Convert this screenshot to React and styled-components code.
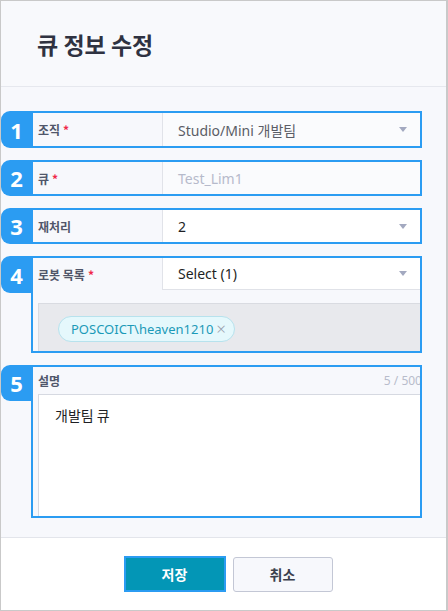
import styled, { createGlobalStyle } from "styled-components";

const GlobalStyle = createGlobalStyle`
  body {
    margin: 0;
    font-family: "Noto Sans", "Noto Sans CJK KR", sans-serif;
  }
`;

const BLUE = "#2b9cf2";

function Caret() {
  return (
    <svg width="8" height="5" viewBox="0 0 8 5">
      <polygon points="0,0 8,0 4,5" fill="#a3a9c0" />
    </svg>
  );
}

function Annotated({ num, badgeHeight = 36, height, children }) {
  return (
    <Row>
      <Badge h={badgeHeight}>{num}</Badge>
      <Box h={height}>{children}</Box>
    </Row>
  );
}

export default function App() {
  return (
    <>
      <GlobalStyle />
      <Frame>
        <Header>
          <h2>큐 정보 수정</h2>
        </Header>
        <Body>
          <Annotated num="1" badgeHeight={37} height={37}>
            <Field>
              <Label>
                조직<Star>*</Star>
              </Label>
              <Value tone="muted">
                <span>Studio/Mini 개발팀</span>
                <Caret />
              </Value>
            </Field>
          </Annotated>

          <Annotated num="2" height={36}>
            <Field>
              <Label>
                큐<Star>*</Star>
              </Label>
              <Value tone="placeholder">
                <span>Test_Lim1</span>
              </Value>
            </Field>
          </Annotated>

          <Annotated num="3" height={36}>
            <Field>
              <Label>재처리</Label>
              <Value tone="white">
                <span>2</span>
                <Caret />
              </Value>
            </Field>
          </Annotated>

          <Annotated num="4" badgeHeight={37} height={97}>
            <Stack>
              <Field fixed={32}>
                <Label>
                  로봇 목록<Star>*</Star>
                </Label>
                <Value tone="white" bordered>
                  <span>Select (1)</span>
                  <Caret />
                </Value>
              </Field>
              <TagArea>
                <Chip>
                  POSCOICT\heaven1210<ChipX>×</ChipX>
                </Chip>
              </TagArea>
            </Stack>
          </Annotated>

          <Annotated num="5" height={153}>
            <Stack>
              <DescHead>
                <Label as="span">설명</Label>
                <Counter>5 / 500</Counter>
              </DescHead>
              <TextArea>개발팀 큐</TextArea>
            </Stack>
          </Annotated>
        </Body>
        <Footer>
          <SaveButton>저장</SaveButton>
          <CancelButton>취소</CancelButton>
        </Footer>
      </Frame>
    </>
  );
}

// --------------------------css

const Frame = styled.div`
  width: 448px;
  height: 611px;
  box-sizing: border-box;
  border: 1px solid #c9c9c9;
  border-right-width: 2px;
  display: flex;
  flex-direction: column;
  background: #f7f8fc;
`;

const Header = styled.div`
  height: 85px;
  flex: none;
  border-bottom: 1px solid #e6e8ee;
  background: #f8f9fc;
  display: flex;
  align-items: center;
  padding-left: 36px;
  h2 {
    margin: 0;
    font-size: 23px;
    font-weight: 700;
    color: #2f3241;
    font-family: "Noto Sans CJK KR", sans-serif;
  }
`;

const Body = styled.div`
  flex: 1;
  padding: 24px 24px 0 0;
  display: flex;
  flex-direction: column;
  gap: 12px;
`;

const Row = styled.div`
  display: flex;
  align-items: flex-start;
`;

const Badge = styled.div`
  width: 31px;
  height: ${(p) => p.h}px;
  flex: none;
  background: ${BLUE};
  border-radius: 9px 0 0 9px;
  color: #fff;
  font-size: 22px;
  font-weight: 700;
  display: flex;
  align-items: center;
  justify-content: center;
  position: relative;
  z-index: 1;
`;

const Box = styled.div`
  flex: 1;
  height: ${(p) => p.h}px;
  box-sizing: border-box;
  border: 2px solid ${BLUE};
  margin-left: -1px;
  overflow: hidden;
  display: flex;
`;

const Stack = styled.div`
  flex: 1;
  display: flex;
  flex-direction: column;
`;

const Field = styled.div`
  flex: ${(p) => (p.fixed ? "none" : "1")};
  height: ${(p) => (p.fixed ? `${p.fixed}px` : "auto")};
  display: flex;
`;

const Label = styled.div`
  width: 124px;
  flex: none;
  padding-left: 5px;
  display: flex;
  align-items: center;
  font-family: "Noto Sans CJK KR", sans-serif;
  font-size: 12px;
  font-weight: 700;
  color: #50566a;
`;

const Star = styled.span`
  color: #f0284a;
  margin-left: 3px;
`;

const Value = styled.div`
  flex: 1;
  display: flex;
  align-items: center;
  justify-content: space-between;
  padding: 0 13px 0 15px;
  border-left: 1px solid #e1e3e9;
  border-bottom: ${(p) => (p.bordered ? "1px solid #e0e2e8" : "none")};
  background: ${(p) => (p.tone === "white" ? "#fff" : "#fafbfd")};
  font-size: 14px;
  color: ${(p) =>
    p.tone === "placeholder"
      ? "#b6bacb"
      : p.tone === "muted"
      ? "#5a5d66"
      : "#1e1f24"};
`;

const TagArea = styled.div`
  flex: 1;
  margin: 13px 0 0 5px;
  background: #e8e9ed;
  border-top: 1px solid #d9dbe1;
  border-left: 1px solid #d9dbe1;
  display: flex;
  align-items: center;
  padding-left: 19px;
  padding-top: 2px;
`;

const Chip = styled.div`
  height: 26px;
  box-sizing: border-box;
  border-radius: 13px;
  background: #e5f8fc;
  border: 1px solid #b7e2ed;
  color: #1b9ab8;
  font-size: 13px;
  display: flex;
  align-items: center;
  padding: 0 8px 0 12px;
`;

const ChipX = styled.span`
  color: #9aa0ae;
  font-size: 17px;
  font-weight: 300;
  line-height: 1;
  margin-left: 3px;
`;

const DescHead = styled.div`
  height: 27px;
  flex: none;
  display: flex;
  align-items: center;
  justify-content: space-between;
  margin-right: -2px;
`;

const Counter = styled.span`
  font-size: 12px;
  color: #b8bccb;
`;

const TextArea = styled.div`
  flex: 1;
  margin-left: 5px;
  margin-right: -6px;
  background: #fff;
  border-top: 1px solid #d6d9e1;
  border-left: 1px solid #d6d9e1;
  padding: 10px 16px;
  font-family: "Noto Sans CJK KR", sans-serif;
  font-size: 14px;
  line-height: 20px;
  color: #1e1f24;
`;

const Footer = styled.div`
  height: 73px;
  flex: none;
  box-sizing: border-box;
  border-top: 1px solid #e3e5eb;
  background: #fff;
  display: flex;
  align-items: center;
  justify-content: center;
  gap: 7px;
  padding-left: 9px;
`;

const SaveButton = styled.button`
  width: 102px;
  height: 36px;
  box-sizing: border-box;
  border: 2px solid ${BLUE};
  background: #0396b6;
  color: #fff;
  font-family: "Noto Sans CJK KR", sans-serif;
  font-size: 14px;
  font-weight: 700;
`;

const CancelButton = styled.button`
  width: 100px;
  height: 35px;
  box-sizing: border-box;
  border: 1px solid #c3c7d5;
  border-radius: 3px;
  background: #f7f8fc;
  color: #3b3f4d;
  font-family: "Noto Sans CJK KR", sans-serif;
  font-size: 14px;
  font-weight: 700;
`;
